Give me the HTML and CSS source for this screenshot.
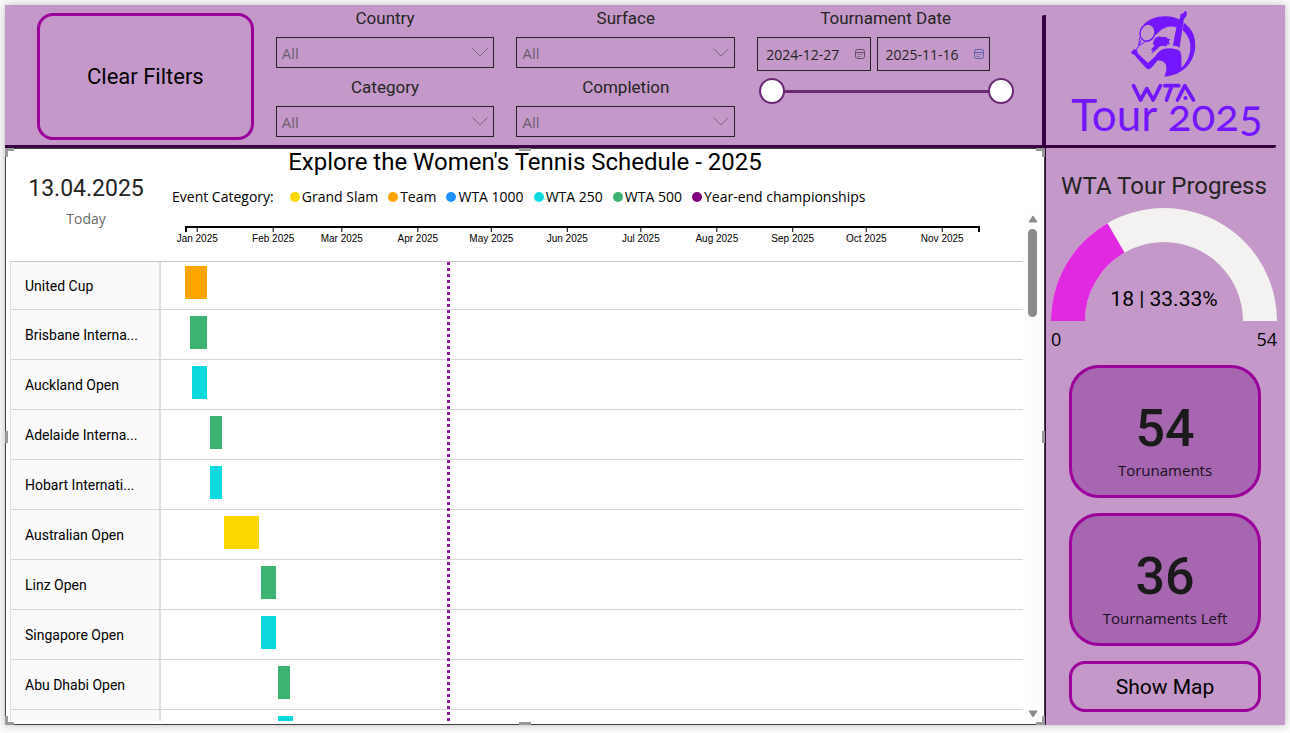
FILE: index.html
```html
<!DOCTYPE html>
<html lang="en">
<head>
<meta charset="utf-8">
<meta name="viewport" content="width=device-width, initial-scale=1">
<title>WTA Tour 2025</title>
<link rel="stylesheet" href="styles.css">
</head>
<body>
<main class="dashboard">
  <header class="filters">
    <button class="outline-button clear-button" type="button">Clear Filters</button>
    <div class="filter-column">
      <div class="filter">
        <label class="filter-label" for="country">Country</label>
        <div class="select-box">
          <select id="country"><option>All</option></select>
          <svg class="chevron" viewBox="0 0 16 9"><path d="M0.5 0.5 8 8 15.500 0.500"/></svg>
        </div>
      </div>
      <div class="filter">
        <label class="filter-label" for="category">Category</label>
        <div class="select-box">
          <select id="category"><option>All</option></select>
          <svg class="chevron" viewBox="0 0 16 9"><path d="M0.5 0.5 8 8 15.500 0.500"/></svg>
        </div>
      </div>
    </div>
    <div class="filter-column">
      <div class="filter">
        <label class="filter-label" for="surface">Surface</label>
        <div class="select-box">
          <select id="surface"><option>All</option></select>
          <svg class="chevron" viewBox="0 0 16 9"><path d="M0.5 0.5 8 8 15.500 0.500"/></svg>
        </div>
      </div>
      <div class="filter">
        <label class="filter-label" for="completion">Completion</label>
        <div class="select-box">
          <select id="completion"><option>All</option></select>
          <svg class="chevron" viewBox="0 0 16 9"><path d="M0.5 0.5 8 8 15.500 0.500"/></svg>
        </div>
      </div>
    </div>
    <div class="date-filter" role="group" aria-labelledby="date-label">
      <div class="filter-label" id="date-label">Tournament Date</div>
      <div class="date-row">
        <div class="date-box">
          <input type="text" value="2024-12-27" aria-label="Start date">
          <svg class="calendar" viewBox="0 0 10 10"><rect x=".5" y=".5" width="9" height="9" rx="2"/><path d="M.5 3.500h9M2.500 5.500h1M4.500 5.500h1M6.500 5.500h1M2.500 7.500h1M4.500 7.500h1"/></svg>
        </div>
        <div class="date-box">
          <input type="text" value="2025-11-16" aria-label="End date">
          <svg class="calendar calendar-blue" viewBox="0 0 10 10"><rect x=".5" y=".5" width="9" height="9" rx="2"/><path d="M.5 3.500h9M2.500 5.500h1M4.500 5.500h1M6.500 5.500h1M2.500 7.500h1M4.500 7.500h1"/></svg>
        </div>
      </div>
      <div class="range">
        <input type="range" min="0" max="324" value="0" aria-label="Range start">
        <input type="range" min="0" max="324" value="324" aria-label="Range end">
      </div>
    </div>
  </header>

  <div class="brand">
    <svg class="logo" viewBox="45 15 200 285" role="img" aria-label="WTA">
      <path d="M84 60C104 38 140 28 176 37L190 42 184 67C164 61 146 66 131 81L118 93 106 80Z"/>
      <path d="M206 53C232 71 243 98 240 130 235 174 203 211 148 215L153 198C156 184 152 174 141 168L128 166 108 189C104 193 98 194 93 190L62 155 58 149C50 150 46 143 50 139L58 132 67 137 67 144 98 174 119 155C128 144 133 137 143 133 160 127 183 130 194 138 201 148 198 174 199 188 219 169 228 143 225 116 222 99 214 85 202 76Z"/>
      <path d="M173 123 187 49 195 38 196 28 204 25 210 17 215 21 214 33 206 43 193 129C187 123 180 121 173 123Z"/>
      <path d="M117 104C124 94 133 93 141 97 148 93 155 97 158 101L166 103 161 108 163 118 155 119 153 125C140 119 132 124 126 132L109 146 113 136 107 134 118 122 113 117Z"/>
      <ellipse class="logo-racket" cx="97" cy="83" rx="22" ry="26" transform="rotate(20 97 83)"/>
      <path class="logo-line" d="M73 98 71 122 62 136M77 107 72 122 90 110Q106 108 118 94"/>
      <path class="logo-word" d="M55 242 76 285 95 251 114 285 136 242M149 242H191M170 242 154 285M187 285 209 242 235 285"/>
      <circle cx="211" cy="279" r="6"/>
    </svg>
    <div class="brand-name">Tour 2025</div>
  </div>

  <section class="schedule">
    <i class="handle handle-nw"></i><i class="handle handle-n"></i><i class="handle handle-ne"></i>
    <i class="handle handle-w"></i><i class="handle handle-e"></i>
    <i class="handle handle-sw"></i><i class="handle handle-s"></i><i class="handle handle-se"></i>

    <div class="schedule-head">
      <div class="today-card">
        <div class="today-date">13.04.2025</div>
        <div class="today-caption">Today</div>
      </div>
      <h1 class="schedule-title">Explore the Women's Tennis Schedule - 2025</h1>
      <div class="legend">
        <span class="legend-title">Event Category:</span>
        <span class="legend-item grand-slam">Grand Slam</span>
        <span class="legend-item team">Team</span>
        <span class="legend-item wta-1000">WTA 1000</span>
        <span class="legend-item wta-250">WTA 250</span>
        <span class="legend-item wta-500">WTA 500</span>
        <span class="legend-item finals">Year-end championships</span>
      </div>
    </div>

    <div class="timeline">
      <div class="chart">
        <svg class="axis">
          <path d="M1 6V1"/>
          <line x1="0" y1="1" x2="100%" y2="1"/>
          <line x1="100%" y1="0" x2="100%" y2="6"/>
          <g class="ticks">
            <line x1="1.54%" y1="1" x2="1.54%" y2="6"/><text x="1.54%" y="16">Jan 2025</text>
            <line x1="11.11%" y1="1" x2="11.11%" y2="6"/><text x="11.11%" y="16">Feb 2025</text>
            <line x1="19.75%" y1="1" x2="19.75%" y2="6"/><text x="19.75%" y="16">Mar 2025</text>
            <line x1="29.32%" y1="1" x2="29.32%" y2="6"/><text x="29.32%" y="16">Apr 2025</text>
            <line x1="38.58%" y1="1" x2="38.58%" y2="6"/><text x="38.58%" y="16">May 2025</text>
            <line x1="48.15%" y1="1" x2="48.15%" y2="6"/><text x="48.15%" y="16">Jun 2025</text>
            <line x1="57.41%" y1="1" x2="57.41%" y2="6"/><text x="57.41%" y="16">Jul 2025</text>
            <line x1="66.98%" y1="1" x2="66.98%" y2="6"/><text x="66.98%" y="16">Aug 2025</text>
            <line x1="76.54%" y1="1" x2="76.54%" y2="6"/><text x="76.54%" y="16">Sep 2025</text>
            <line x1="85.8%" y1="1" x2="85.8%" y2="6"/><text x="85.8%" y="16">Oct 2025</text>
            <line x1="95.37%" y1="1" x2="95.37%" y2="6"/><text x="95.37%" y="16">Nov 2025</text>
          </g>
        </svg>
        <div class="rows">
          <table class="gantt">
            <tbody>
              <tr><th scope="row">United Cup</th><td><div class="bar team" style="--start:0;--days:9"></div></td></tr>
              <tr><th scope="row">Brisbane Interna...</th><td><div class="bar wta-500" style="--start:2;--days:7"></div></td></tr>
              <tr><th scope="row">Auckland Open</th><td><div class="bar wta-250" style="--start:3;--days:6"></div></td></tr>
              <tr><th scope="row">Adelaide Interna...</th><td><div class="bar wta-500" style="--start:10;--days:5"></div></td></tr>
              <tr><th scope="row">Hobart Internati...</th><td><div class="bar wta-250" style="--start:10;--days:5"></div></td></tr>
              <tr><th scope="row">Australian Open</th><td><div class="bar grand-slam" style="--start:16;--days:14"></div></td></tr>
              <tr><th scope="row">Linz Open</th><td><div class="bar wta-500" style="--start:31;--days:6"></div></td></tr>
              <tr><th scope="row">Singapore Open</th><td><div class="bar wta-250" style="--start:31;--days:6"></div></td></tr>
              <tr><th scope="row">Abu Dhabi Open</th><td><div class="bar wta-500" style="--start:38;--days:5"></div></td></tr>
              <tr><th scope="row"></th><td><div class="bar wta-250" style="--start:38;--days:6"></div></td></tr>
            </tbody>
          </table>
          <div class="today-line" style="--start:107"></div>
        </div>
      </div>
      <div class="scrollbar">
        <svg viewBox="0 0 10 8"><path d="M5 1 9 7H1Z"/></svg>
        <div class="scroll-thumb"></div>
        <svg class="scroll-down" viewBox="0 0 10 8"><path d="M5 7 9 1H1Z"/></svg>
      </div>
    </div>
  </section>

  <aside class="sidebar">
    <section class="progress">
      <h2 class="progress-title">WTA Tour Progress</h2>
      <div class="gauge">
        <svg viewBox="0 0 226 113">
          <path fill="#f3f2f1" d="M0 113A113 113 0 0 1 226 113H192A79 79 0 0 0 34 113Z"/>
          <path fill="#e129e1" d="M0 113A113 113 0 0 1 56.500 15.140L73.500 44.580A79 79 0 0 0 34 113Z"/>
        </svg>
        <div class="gauge-value">18 | 33.33%</div>
      </div>
      <div class="gauge-scale"><span>0</span><span>54</span></div>
    </section>
    <div class="card"><div class="card-value">54</div><div class="card-label">Torunaments</div></div>
    <div class="card"><div class="card-value">36</div><div class="card-label">Tournaments Left</div></div>
    <button class="outline-button" type="button">Show Map</button>
  </aside>
</main>
</body>
</html>
```
FILE: styles.css
```css
* { box-sizing: border-box; }

:root {
  --lilac: #c499c9;
  --line: #35013f;
  --accent: #9b009b;
  --din: Roboto, "Liberation Sans", sans-serif;
  --segoe: "Open Sans", "Noto Sans", sans-serif;
}

body {
  margin: 0;
  padding: 5px 5px 8px;
  min-height: 100vh;
  display: flex;
  background: #fbfbfb;
  font-family: var(--din);
  color: #252423;
}

button, input, select { font: inherit; color: inherit; }

.dashboard {
  flex: 1;
  display: grid;
  grid-template-columns: minmax(0, 1fr) 240px;
  grid-template-rows: 143px minmax(0, 1fr);
  background: var(--lilac);
  box-shadow: 0 0 8px rgba(0, 0, 0, .25);
}

/* Filter bar */
.filters {
  display: grid;
  grid-template-columns: minmax(0, 216fr) minmax(0, 218fr) minmax(0, 218fr) minmax(0, 256fr);
  column-gap: 22px;
  padding: 0 31px 0 32px;
  border-bottom: 3px solid var(--line);
}

.outline-button {
  border: 3px solid var(--accent);
  border-radius: 16px;
  background: transparent;
  color: #000;
  font-size: 21px;
}

.clear-button { margin: 8px 0 6px; font-size: 22px; }

.filter-column { padding-top: 3px; }
.filter { height: 69px; }

.filter-label {
  display: block;
  height: 29px;
  line-height: 20px;
  font-size: 17px;
  text-align: center;
}

.select-box { display: grid; align-items: center; }
.select-box > * { grid-area: 1 / 1; }

.select-box select {
  appearance: none;
  width: 100%;
  height: 31px;
  padding: 1px 5px;
  border: 1px solid #252423;
  border-radius: 0;
  background: transparent;
  color: #6b5f6d;
  font-family: var(--segoe);
  font-size: 15px;
}

.chevron {
  justify-self: end;
  width: 16px;
  height: 9px;
  margin-right: 6px;
  fill: none;
  stroke: #7a6a7d;
  pointer-events: none;
}

.date-filter { padding-top: 3px; }
.date-row { display: flex; gap: 6px; margin-right: 24px; }

.date-box {
  flex: 1;
  min-width: 0;
  height: 34px;
  display: flex;
  align-items: center;
  padding: 0 5px 0 8px;
  border: 1px solid #252423;
}

.date-box input {
  flex: 1;
  min-width: 0;
  padding: 0;
  border: 0;
  background: transparent;
  font-family: var(--segoe);
  font-size: 14px;
}

.calendar { width: 10px; height: 10px; flex: none; fill: none; stroke: #5e4c62; }
.calendar-blue { stroke: #5a5fa8; }

.range { display: grid; margin: 7px 0 0 2px; }

.range input {
  grid-area: 1 / 1;
  appearance: none;
  width: 100%;
  height: 26px;
  margin: 0;
  background: linear-gradient(#692a73, #692a73) center / calc(100% - 26px) 3px no-repeat;
  pointer-events: none;
}

.range input::-webkit-slider-thumb {
  appearance: none;
  width: 26px;
  height: 26px;
  border: 2px solid #692a73;
  border-radius: 50%;
  background: #fff;
  pointer-events: auto;
}

.range input + input { background: none; }

/* Brand block */
.brand {
  display: flex;
  flex-direction: column;
  align-items: center;
  margin: 10px 9px 0 -3px;
  padding-left: 5px;
  border-left: 4px solid var(--line);
  border-bottom: 3px solid var(--line);
  border-radius: 2px;
  color: #7315ff;
}

.logo { width: 67px; height: 95px; margin-top: -5px; flex: none; fill: currentColor; }
.logo-line { fill: none; stroke: currentColor; stroke-width: 3; }
.logo-racket { fill: var(--lilac); stroke: currentColor; stroke-width: 4; }
.logo-word { fill: none; stroke: currentColor; stroke-width: 11; stroke-linecap: round; stroke-linejoin: round; }

.brand-name {
  margin-top: -16px;
  padding-left: 7px;
  font: 400 44px/50px Lato, "Open Sans", sans-serif;
  font-variant-numeric: oldstyle-nums;
  white-space: nowrap;
}

/* Schedule visual */
.schedule {
  position: relative;
  display: flex;
  flex-direction: column;
  border: 1px solid #404040;
  background: #fff;
}

.schedule-head {
  display: grid;
  grid-template-columns: 160px minmax(0, 1fr);
  grid-template-rows: 27px 41px;
}

.today-card { grid-column: 1; grid-row: 1 / 3; padding-top: 24px; text-align: center; }
.today-date { font-size: 23px; line-height: 31px; }
.today-caption { font: 14px/30px var(--segoe); color: #6b6a69; }

.schedule-title {
  grid-column: 1 / 3;
  grid-row: 1;
  margin: 0;
  text-align: center;
  font-size: 24px;
  font-weight: 400;
  line-height: 27px;
  color: #000;
}

.legend {
  grid-column: 2;
  display: flex;
  align-items: center;
  gap: 10px;
  padding-left: 6px;
  font: 14px/20px var(--segoe);
  color: #000;
  white-space: nowrap;
}

.legend-title { margin-right: 6px; }
.legend-item { display: flex; align-items: center; gap: 2px; }
.legend-item::before { content: ""; width: 10px; height: 10px; border-radius: 50%; background: var(--category); }

.grand-slam { --category: #ffd700; }
.team { --category: #ffa500; }
.wta-1000 { --category: #1e90ff; }
.wta-250 { --category: #0cd9dd; }
.wta-500 { --category: #3cb371; }
.finals { --category: #800080; }

.timeline { flex: 1; display: flex; min-height: 0; padding: 0 4px 3px; }

.chart {
  --label: 151px;
  --lead: 24px;
  --trail: 44px;
  flex: 1;
  min-width: 0;
  display: flex;
  flex-direction: column;
}

.axis {
  width: calc(100% - var(--label) - var(--lead) - var(--trail));
  height: 35px;
  margin: 9px 0 0 calc(var(--label) + var(--lead));
  overflow: visible;
  stroke: #000;
  stroke-width: 2;
  fill: none;
  flex: none;
}

.ticks { stroke-width: 1; }
.ticks text { font: 10px "Liberation Sans", sans-serif; text-anchor: middle; stroke: none; fill: #000; }

.rows { position: relative; flex: 1 1 0; min-height: 400px; overflow: hidden; }

.gantt { width: 100%; table-layout: fixed; border-spacing: 0; border-top: 1px solid #c8c8c8; }

.gantt th, .gantt td {
  height: 50px;
  padding: 0;
  border-bottom: 1px solid #d6d6d6;
}

.gantt th {
  width: var(--label);
  padding-left: 14px;
  border-left: 1px solid #e0e0e0;
  border-right: 2px solid #e0e0e0;
  background: #fafafa;
  font-size: 14px;
  font-weight: 400;
  text-align: left;
  color: #000;
}

.gantt td { padding: 6px var(--trail) 0 var(--lead); vertical-align: top; }
.gantt tr:first-child > * { height: 48px; }
.gantt tr:first-child td { padding-top: 4px; }

.bar {
  height: 33px;
  width: calc(100% * var(--days) / 324);
  margin-left: calc(100% * var(--start) / 324);
  background: var(--category);
}

.today-line {
  position: absolute;
  top: 1px;
  bottom: 0;
  left: calc(var(--label) + var(--lead) + (100% - var(--label) - var(--lead) - var(--trail)) * var(--start) / 324);
  width: 3px;
  background: repeating-linear-gradient(#8a1a98 0 3px, transparent 3px 6px);
}

.scrollbar {
  width: 15px;
  display: flex;
  flex-direction: column;
  align-items: center;
  margin: -8px 0 0 2px;
  padding: 6px 0 3px;
  background: #fcfcfc;
}

.scrollbar svg { width: 10px; height: 8px; fill: #8b8b8b; stroke: #8b8b8b; stroke-linejoin: round; }
.scroll-thumb { width: 9px; height: 88px; margin-top: 6px; border-radius: 5px; background: #8b8b8b; }
.scroll-down { margin-top: auto; }

/* Resize handles over the frame of the selected visual */
.handle { position: absolute; width: 9px; height: 9px; border: 0 solid #999; }
.handle-nw { top: -1px; left: -1px; border-width: 3px 0 0 3px; }
.handle-ne { top: -1px; right: -1px; border-width: 3px 3px 0 0; }
.handle-sw { bottom: -1px; left: -1px; border-width: 0 0 3px 3px; }
.handle-se { bottom: -1px; right: -1px; border-width: 0 3px 3px 0; }
.handle-n, .handle-s { left: calc(50% - 6px); width: 12px; height: 3px; background: #999; }
.handle-n { top: -1px; }
.handle-s { bottom: -1px; }
.handle-w, .handle-e { top: calc(50% - 6px); width: 3px; height: 12px; background: #999; }
.handle-w { left: -1px; }
.handle-e { right: -1px; }

/* Sidebar */
.sidebar {
  display: flex;
  flex-direction: column;
  padding: 21px 8px 13px 5px;
  border-left: 1px solid var(--line);
}

.progress { margin-bottom: 13px; }
.progress-title { margin: 0 0 5px; font-size: 24px; font-weight: 400; line-height: 34px; text-align: center; white-space: nowrap; }
.gauge { display: grid; }
.gauge > * { grid-area: 1 / 1; }
.gauge svg { width: 100%; }
.gauge-value { align-self: end; padding-bottom: 9px; font-size: 21px; line-height: 26px; text-align: center; color: #000; }
.gauge-scale { display: flex; justify-content: space-between; padding-top: 5px; font: 18px/26px var(--segoe); color: #000; }

.card {
  height: 133px;
  margin: 0 16px 15px 18px;
  padding-top: 30px;
  border: 3px solid var(--accent);
  border-radius: 30px;
  background: #a666b0;
  text-align: center;
}

.card-value { font-size: 52px; font-weight: 500; line-height: 62px; color: #1a1a1a; }
.card-label { font: 15px/20px var(--segoe); color: #1a0f1c; }
.sidebar .outline-button { height: 51px; margin: 0 16px 0 18px; }
```
